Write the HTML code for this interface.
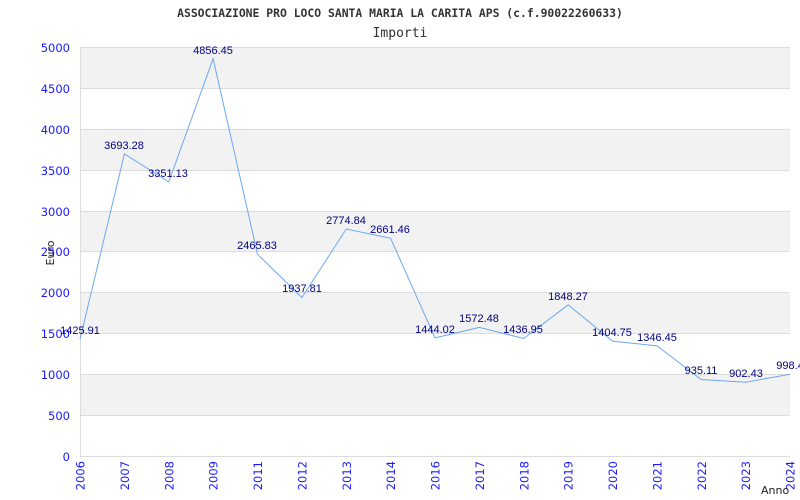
<!DOCTYPE html>
<html><head><meta charset="utf-8"><style>body{margin:0;background:#fff}svg{display:block}</style></head><body>
<svg width="800" height="500" xmlns="http://www.w3.org/2000/svg">
<rect width="800" height="500" fill="#fff"/>
<g fill="#f2f2f2">
<rect x="80" y="47" width="710" height="41"/><rect x="80" y="129" width="710" height="41"/><rect x="80" y="211" width="710" height="40"/><rect x="80" y="292" width="710" height="41"/><rect x="80" y="374" width="710" height="41"/>
</g>
<g stroke="#dcdcdc" stroke-width="1">
<line x1="80" y1="47.5" x2="790" y2="47.5"/><line x1="80" y1="88.5" x2="790" y2="88.5"/><line x1="80" y1="129.5" x2="790" y2="129.5"/><line x1="80" y1="170.5" x2="790" y2="170.5"/><line x1="80" y1="211.5" x2="790" y2="211.5"/><line x1="80" y1="251.5" x2="790" y2="251.5"/><line x1="80" y1="292.5" x2="790" y2="292.5"/><line x1="80" y1="333.5" x2="790" y2="333.5"/><line x1="80" y1="374.5" x2="790" y2="374.5"/><line x1="80" y1="415.5" x2="790" y2="415.5"/><line x1="80" y1="456.5" x2="790" y2="456.5"/>
<line x1="80.5" y1="47" x2="80.5" y2="456"/>
</g>
<text x="400" y="17" font-family="DejaVu Sans Mono,monospace" font-size="11.4" font-weight="bold" fill="#333" text-anchor="middle">ASSOCIAZIONE PRO LOCO SANTA MARIA LA CARITA APS (c.f.90022260633)</text>
<text x="400" y="37" font-family="DejaVu Sans Mono,monospace" font-size="13" fill="#333" text-anchor="middle">Importi</text>
<g font-family="DejaVu Sans,sans-serif" font-size="11.5" fill="#1a1aff" text-anchor="end">
<text x="70" y="52">5000</text><text x="70" y="93">4500</text><text x="70" y="134">4000</text><text x="70" y="175">3500</text><text x="70" y="216">3000</text><text x="70" y="256">2500</text><text x="70" y="297">2000</text><text x="70" y="338">1500</text><text x="70" y="379">1000</text><text x="70" y="420">500</text><text x="70" y="461">0</text>
</g>
<g font-family="DejaVu Sans,sans-serif" font-size="11.5" fill="#1a1aff" text-anchor="end">
<text transform="translate(84.5,461) rotate(-90)">2006</text>
<text transform="translate(128.9,461) rotate(-90)">2007</text>
<text transform="translate(173.3,461) rotate(-90)">2008</text>
<text transform="translate(217.6,461) rotate(-90)">2009</text>
<text transform="translate(262,461) rotate(-90)">2011</text>
<text transform="translate(306.4,461) rotate(-90)">2012</text>
<text transform="translate(350.8,461) rotate(-90)">2013</text>
<text transform="translate(395.1,461) rotate(-90)">2014</text>
<text transform="translate(439.5,461) rotate(-90)">2016</text>
<text transform="translate(483.9,461) rotate(-90)">2017</text>
<text transform="translate(528.3,461) rotate(-90)">2018</text>
<text transform="translate(572.6,461) rotate(-90)">2019</text>
<text transform="translate(617,461) rotate(-90)">2020</text>
<text transform="translate(661.4,461) rotate(-90)">2021</text>
<text transform="translate(705.8,461) rotate(-90)">2022</text>
<text transform="translate(750.1,461) rotate(-90)">2023</text>
<text transform="translate(794.5,461) rotate(-90)">2024</text>
</g>
<text transform="translate(54,253) rotate(-90)" font-family="DejaVu Sans,sans-serif" font-size="11" fill="#222" text-anchor="middle">Euro</text>
<text x="761" y="494" font-family="DejaVu Sans,sans-serif" font-size="11" fill="#222">Anno</text>
<polyline fill="none" stroke="#6aa8f0" stroke-width="1" points="80,339.4 124.4,153.9 168.8,181.9 213.1,58.7 257.5,254.3 301.9,297.5 346.3,229 390.6,238.3 435,337.9 479.4,327.4 523.8,338.5 568.1,304.8 612.5,341.1 656.9,345.9 701.3,379.5 745.6,382.2 790,374.3"/>
<g font-family="Liberation Sans,sans-serif" font-size="11" fill="#000080" text-anchor="middle">
<text x="80" y="334">1425.91</text>
<text x="124" y="149">3693.28</text>
<text x="168" y="177">3351.13</text>
<text x="213" y="54">4856.45</text>
<text x="257" y="249">2465.83</text>
<text x="302" y="292">1937.81</text>
<text x="346" y="224">2774.84</text>
<text x="390" y="233">2661.46</text>
<text x="435" y="333">1444.02</text>
<text x="479" y="322">1572.48</text>
<text x="523" y="333">1436.95</text>
<text x="568" y="300">1848.27</text>
<text x="612" y="336">1404.75</text>
<text x="657" y="341">1346.45</text>
<text x="701" y="374">935.11</text>
<text x="746" y="377">902.43</text>
<text x="790" y="369">998.4</text>
</g>
</svg>
</body></html>
